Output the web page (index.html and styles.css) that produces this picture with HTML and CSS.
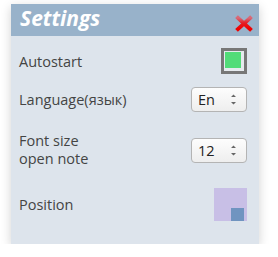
FILE: index.html
```html
<!DOCTYPE html>
<html lang="en">
<head>
    <meta charset="UTF-8">
    <title>Settings</title>
    <link rel="stylesheet" href="styles.css">
</head>
<body>
    <div class="panel">
        <div class="header">
            <h2>Settings</h2>
            <svg class="close" width="18" height="17" viewBox="0 0 18 17">
                <defs>
                    <linearGradient id="xg" x1="0" y1="0" x2="0" y2="1">
                        <stop offset="0" stop-color="#d86a78"/>
                        <stop offset="0.45" stop-color="#e41e24"/>
                        <stop offset="1" stop-color="#f00000"/>
                    </linearGradient>
                </defs>
                <path d="M3 3 L15 14 M15 3 L3 14" stroke="url(#xg)" stroke-width="4" stroke-linecap="square"/>
            </svg>
        </div>
        <div class="rows">
            <div class="row">
                <span class="label">Autostart</span>
                <span class="check"><span class="tick"></span></span>
            </div>
            <div class="row">
                <span class="label">Language(язык)</span>
                <span class="spin">
                    <span>En</span>
                    <svg class="arrows" width="7" height="13" viewBox="0 0 7 13"><path d="M1 4 L3.5 1.5 L6 4 Z M1 9 L3.5 11.5 L6 9 Z" fill="#666"/></svg>
                </span>
            </div>
            <div class="row">
                <span class="label two-line">Font size<br>open note</span>
                <span class="spin">
                    <span>12</span>
                    <svg class="arrows" width="7" height="13" viewBox="0 0 7 13"><path d="M1 4 L3.5 1.5 L6 4 Z M1 9 L3.5 11.5 L6 9 Z" fill="#666"/></svg>
                </span>
            </div>
            <div class="row">
                <span class="label">Position</span>
                <span class="pos"><span class="pos-dot"></span></span>
            </div>
        </div>
    </div>
</body>
</html>
```

FILE: styles.css
```css
body {
    margin: 0;
    background: #fff;
    font-family: 'Open Sans', sans-serif;
    color: #444;
}

.panel {
    width: 248px;
    height: 240px;
    margin: 4px 0 0 11px;
    background: #dde4ec;
    box-shadow: 0 3px 10px rgba(0, 0, 0, 0.18);
}

.header {
    height: 32px;
    background: #98b2ca;
    display: flex;
    justify-content: space-between;
    align-items: flex-start;
    padding: 0 6px 0 9px;
}

h2 {
    margin: 0;
    color: #fff;
    font-size: 21px;
    font-style: italic;
    font-weight: bold;
    line-height: 28px;
}

.close {
    margin-top: 11px;
}

.rows {
    display: grid;
    grid-template-rows: 50px 27px 74px 35px;
    padding: 0 12px 0 8px;
}

.row {
    display: flex;
    justify-content: space-between;
    align-items: center;
    font-size: 14.5px;
    line-height: 17px;
}

.two-line {
    line-height: 18px;
}

.check {
    width: 18px;
    height: 18px;
    border: 3px solid #777;
    padding: 1px;
    background: #e6eaee;
}

.tick {
    display: block;
    width: 16px;
    height: 16px;
    background: #52dc78;
}

.spin {
    width: 56px;
    height: 25px;
    box-sizing: border-box;
    border: 1px solid #b4b4b4;
    border-radius: 4px;
    background: linear-gradient(#fdfdfd, #eeeeee);
    display: flex;
    justify-content: space-between;
    align-items: center;
    padding: 0 9px 0 6px;
    color: #222;
}

.pos {
    width: 33px;
    height: 33px;
    background: #c8bfe6;
    display: flex;
    justify-content: flex-end;
    align-items: flex-end;
}

.pos-dot {
    width: 13px;
    height: 13px;
    margin-right: 3px;
    background: #7094c0;
}
```
